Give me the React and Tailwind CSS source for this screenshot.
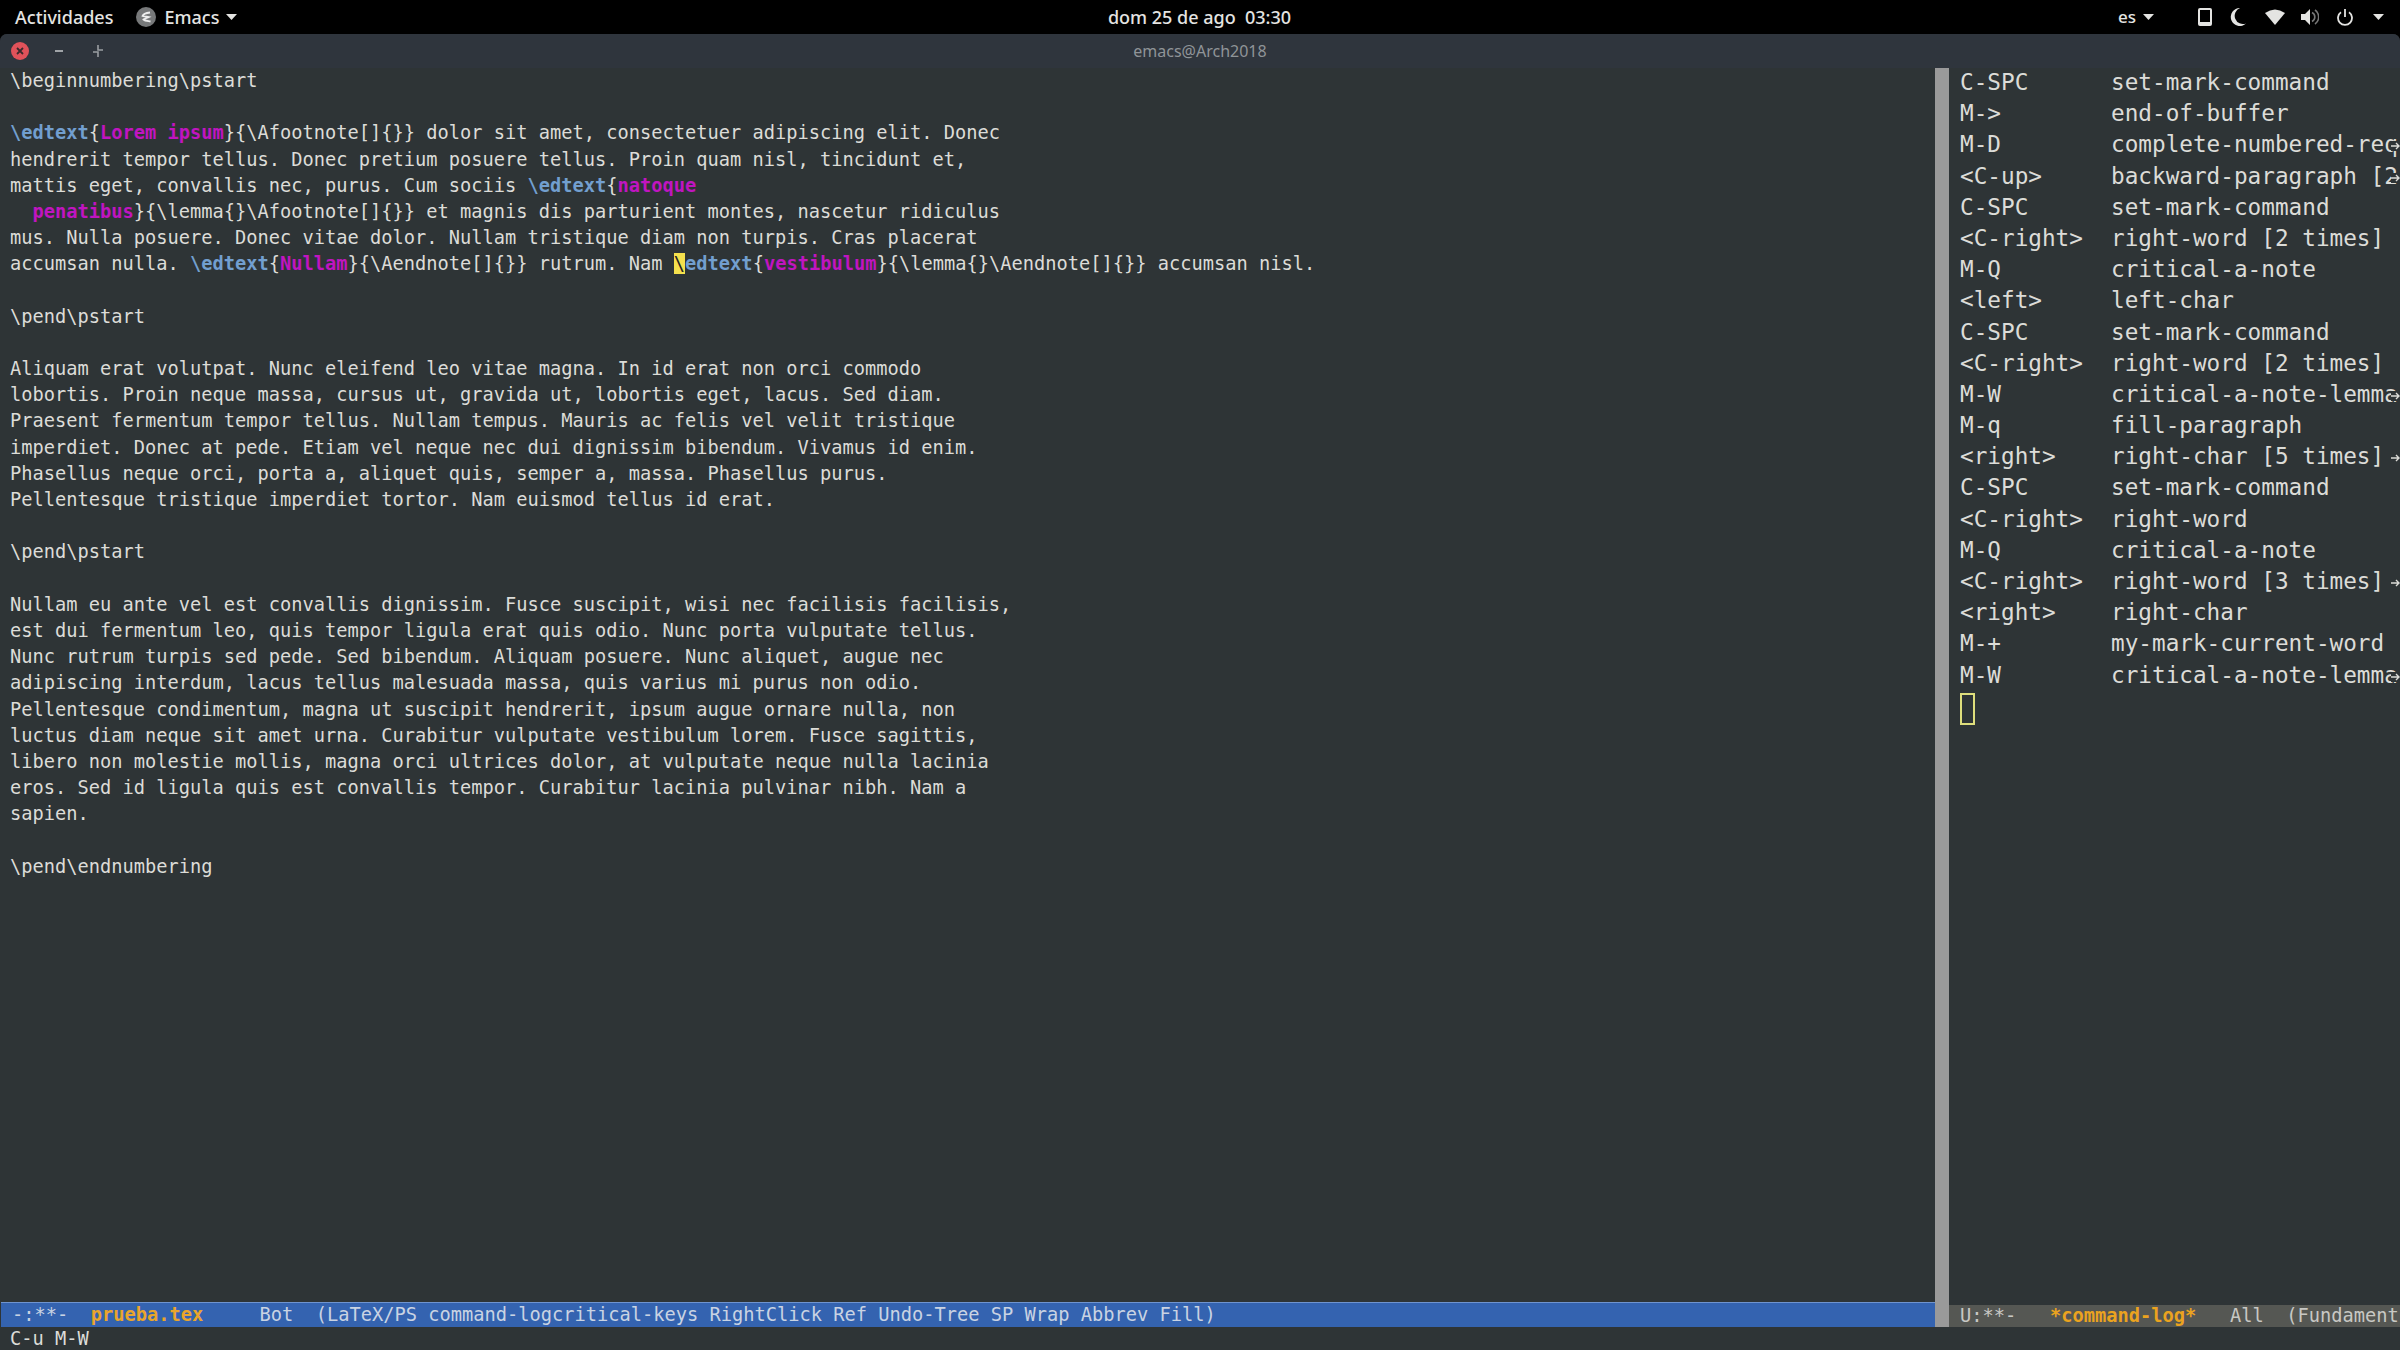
import React from 'react';

const mono = "font-['DejaVu_Sans_Mono','Liberation_Mono',monospace]";

const cmdLog = [
  ['C-SPC', 'set-mark-command'],
  ['M->', 'end-of-buffer'],
  ['M-D', 'complete-numbered-req', true],
  ['<C-up>', 'backward-paragraph [2', true],
  ['C-SPC', 'set-mark-command'],
  ['<C-right>', 'right-word [2 times]'],
  ['M-Q', 'critical-a-note'],
  ['<left>', 'left-char'],
  ['C-SPC', 'set-mark-command'],
  ['<C-right>', 'right-word [2 times]'],
  ['M-W', 'critical-a-note-lemma', true],
  ['M-q', 'fill-paragraph'],
  ['<right>', 'right-char [5 times]', true],
  ['C-SPC', 'set-mark-command'],
  ['<C-right>', 'right-word'],
  ['M-Q', 'critical-a-note'],
  ['<C-right>', 'right-word [3 times]', true],
  ['<right>', 'right-char'],
  ['M-+', 'my-mark-current-word'],
  ['M-W', 'critical-a-note-lemma', true],
];

const Cmd = ({ children }) => <span className="text-[#729fcf] font-bold">{children}</span>;
const Arg = ({ children }) => <span className="text-[#c015c0] font-bold">{children}</span>;

const Line = ({ children }) => <div className="h-[26.2px] leading-[22px] whitespace-pre">{children || ' '}</div>;

const Triangle = ({ className }) => (
  <svg width="11" height="6" viewBox="0 0 11 6" className={className}>
    <path d="M0 0H11L5.5 6Z" fill="currentColor" />
  </svg>
);

const App = () => {
  return (
    <div className="w-[2400px] h-[1350px] flex flex-col overflow-hidden bg-black">
      {/* gnome top bar */}
      <div className="h-[34px] shrink-0 text-[#e4e4e2] text-[18px] font-medium font-['Noto_Sans',sans-serif] grid grid-cols-3 items-center pl-[15px] pr-[16px]">
        <div className="flex items-center">
          <span>Actividades</span>
          <svg width="20" height="20" viewBox="0 0 20 20" className="ml-[23px]">
            <circle cx="10" cy="10" r="10" fill="#77797a" />
            <path d="M14 5.5C10 6 7 7.5 6.5 9C9 10 11 9.5 13 10C11 11 8.5 11.5 7.5 12.5C9 14 12 14 14.5 14.5" fill="none" stroke="#eeeeee" strokeWidth="1.8" />
          </svg>
          <span className="ml-[8px]">Emacs</span>
          <Triangle className="ml-[7px]" />
        </div>
        <span className="text-center whitespace-pre">dom 25 de ago  03:30</span>
        <div className="flex items-center justify-end">
          <span className="text-[17px]">es</span>
          <Triangle className="ml-[7px]" />
          <svg width="14" height="18" viewBox="0 0 14 18" className="ml-[44px]">
            <path fillRule="evenodd" d="M2 0H12A2 2 0 0 1 14 2V16A2 2 0 0 1 12 18H2A2 2 0 0 1 0 16V2A2 2 0 0 1 2 0ZM2 2V14H12V2Z" fill="currentColor" />
          </svg>
          <svg width="16" height="18" viewBox="0 0 16 18" className="ml-[18px]">
            <path d="M10 0A9 9 0 1 0 16 15.5A8 8 0 0 1 10 0Z" fill="currentColor" />
          </svg>
          <svg width="20" height="16" viewBox="0 0 20 16" className="ml-[19px]">
            <path d="M0 4Q10 -3 20 4L10 16Z" fill="currentColor" />
          </svg>
          <svg width="18" height="16" viewBox="0 0 18 16" className="ml-[16px]">
            <path d="M0 5H4L9 0V16L4 11H0Z" fill="currentColor" />
            <path d="M11 3.5A5 5 0 0 1 11 12.5M14 1A8.5 8.5 0 0 1 14 15" fill="none" stroke="#777" strokeWidth="1.6" />
          </svg>
          <svg width="16" height="17" viewBox="0 0 16 17" className="ml-[18px]">
            <path d="M8 0V8M4 3.2A7 7 0 1 0 12 3.2" fill="none" stroke="currentColor" strokeWidth="1.8" />
          </svg>
          <Triangle className="ml-[20px]" />
        </div>
      </div>

      {/* emacs window */}
      <div className="flex-1 min-h-0 flex flex-col bg-[#2e3436] rounded-t-[7px] overflow-hidden">
        <div className="h-[34px] shrink-0 bg-[#2f353d] text-[#8f9498] text-[16px] font-['Noto_Sans',sans-serif] grid grid-cols-3 items-center px-[11px]">
          <div className="flex items-center">
            <span className="w-[18px] h-[18px] rounded-full bg-[#e0525a] text-[#3a2a2c] flex items-center justify-center">
              <svg width="8" height="8" viewBox="0 0 8 8">
                <path d="M1 1L7 7M7 1L1 7" stroke="currentColor" strokeWidth="1.8" />
              </svg>
            </span>
            <span className="w-[8px] h-[2px] bg-[#a0a4a8] ml-[26px]"></span>
            <svg width="12" height="12" viewBox="0 0 12 12" className="ml-[29px]">
              <path d="M6 0V5H11M6 12V7H1" fill="none" stroke="#9a9ea2" strokeWidth="1.6" />
            </svg>
          </div>
          <span className="text-center">emacs@Arch2018</span>
        </div>

        <div className={`flex-1 flex min-h-0 ${mono} text-[18.7px] text-[#dcdcd8]`}>
          <div className="w-[1935px] flex flex-col">
            <div className="flex-1 pl-[10px] pt-[2px]">
              <Line>\beginnumbering\pstart</Line>
              <Line />
              <Line><Cmd>\edtext</Cmd>{'{'}<Arg>Lorem ipsum</Arg>{'}{\\Afootnote[]{}}'} dolor sit amet, consectetuer adipiscing elit. Donec</Line>
              <Line>hendrerit tempor tellus. Donec pretium posuere tellus. Proin quam nisl, tincidunt et,</Line>
              <Line>mattis eget, convallis nec, purus. Cum sociis <Cmd>\edtext</Cmd>{'{'}<Arg>natoque</Arg></Line>
              <Line>{'  '}<Arg>penatibus</Arg>{'}{\\lemma{}\\Afootnote[]{}}'} et magnis dis parturient montes, nascetur ridiculus</Line>
              <Line>mus. Nulla posuere. Donec vitae dolor. Nullam tristique diam non turpis. Cras placerat</Line>
              <Line>accumsan nulla. <Cmd>\edtext</Cmd>{'{'}<Arg>Nullam</Arg>{'}{\\Aendnote[]{}}'} rutrum. Nam <span className="bg-[#f4e04d] text-[#222]">\</span><Cmd>edtext</Cmd>{'{'}<Arg>vestibulum</Arg>{'}{\\lemma{}\\Aendnote[]{}}'} accumsan nisl.</Line>
              <Line />
              <Line>\pend\pstart</Line>
              <Line />
              <Line>Aliquam erat volutpat. Nunc eleifend leo vitae magna. In id erat non orci commodo</Line>
              <Line>lobortis. Proin neque massa, cursus ut, gravida ut, lobortis eget, lacus. Sed diam.</Line>
              <Line>Praesent fermentum tempor tellus. Nullam tempus. Mauris ac felis vel velit tristique</Line>
              <Line>imperdiet. Donec at pede. Etiam vel neque nec dui dignissim bibendum. Vivamus id enim.</Line>
              <Line>Phasellus neque orci, porta a, aliquet quis, semper a, massa. Phasellus purus.</Line>
              <Line>Pellentesque tristique imperdiet tortor. Nam euismod tellus id erat.</Line>
              <Line />
              <Line>\pend\pstart</Line>
              <Line />
              <Line>Nullam eu ante vel est convallis dignissim. Fusce suscipit, wisi nec facilisis facilisis,</Line>
              <Line>est dui fermentum leo, quis tempor ligula erat quis odio. Nunc porta vulputate tellus.</Line>
              <Line>Nunc rutrum turpis sed pede. Sed bibendum. Aliquam posuere. Nunc aliquet, augue nec</Line>
              <Line>adipiscing interdum, lacus tellus malesuada massa, quis varius mi purus non odio.</Line>
              <Line>Pellentesque condimentum, magna ut suscipit hendrerit, ipsum augue ornare nulla, non</Line>
              <Line>luctus diam neque sit amet urna. Curabitur vulputate vestibulum lorem. Fusce sagittis,</Line>
              <Line>libero non molestie mollis, magna orci ultrices dolor, at vulputate neque nulla lacinia</Line>
              <Line>eros. Sed id ligula quis est convallis tempor. Curabitur lacinia pulvinar nibh. Nam a</Line>
              <Line>sapien.</Line>
              <Line />
              <Line>\pend\endnumbering</Line>
            </div>
            <div className="h-[25px] ml-[1px] bg-[#3463b0] border-t border-[#6f94cf] text-[#c9d3e3] whitespace-pre pl-[11px] leading-[24px]">
              -:**-  <span className="text-[#e9a52c] font-bold">prueba.tex</span>     Bot  (LaTeX/PS command-logcritical-keys RightClick Ref Undo-Tree SP Wrap Abbrev Fill)
            </div>
          </div>
          <div className="w-[14px] bg-[#9a9a9a]"></div>
          <div className="flex-1 flex flex-col min-w-0">
            <div className="flex-1 pl-[11px] text-[22.7px] overflow-hidden">
              {cmdLog.map((row, i) => (
                <div key={i} className="relative flex h-[31.2px] leading-[29px] whitespace-pre overflow-hidden">
                  <span className="w-[151px] shrink-0">{row[0]}</span>
                  <span>{row[1]}</span>
                  {row[2] && (
                    <svg width="9" height="10" viewBox="0 0 9 10" className="absolute right-0 top-[11px] bg-[#2e3436]">
                      <path d="M0 5H8M5 2L8 5L5 8" fill="none" stroke="#dcdcd8" strokeWidth="1.4" />
                    </svg>
                  )}
                </div>
              ))}
              <div className="w-[15px] h-[32px] border-2 border-[#dede7c] mt-[1px]"></div>
            </div>
            <div className="h-[22px] bg-[#555753] text-[#c8c8c4] whitespace-pre pl-[11px] leading-[22px] overflow-hidden">
              U:**-   <span className="text-[#eba31f] font-bold">*command-log*</span>   All  (Fundament
            </div>
          </div>
        </div>
        <div className={`h-[23px] shrink-0 ${mono} text-[18.7px] text-[#dcdcd8] pl-[10px] leading-[23px]`}>C-u M-W</div>
      </div>
    </div>
  );
};

export default App;
